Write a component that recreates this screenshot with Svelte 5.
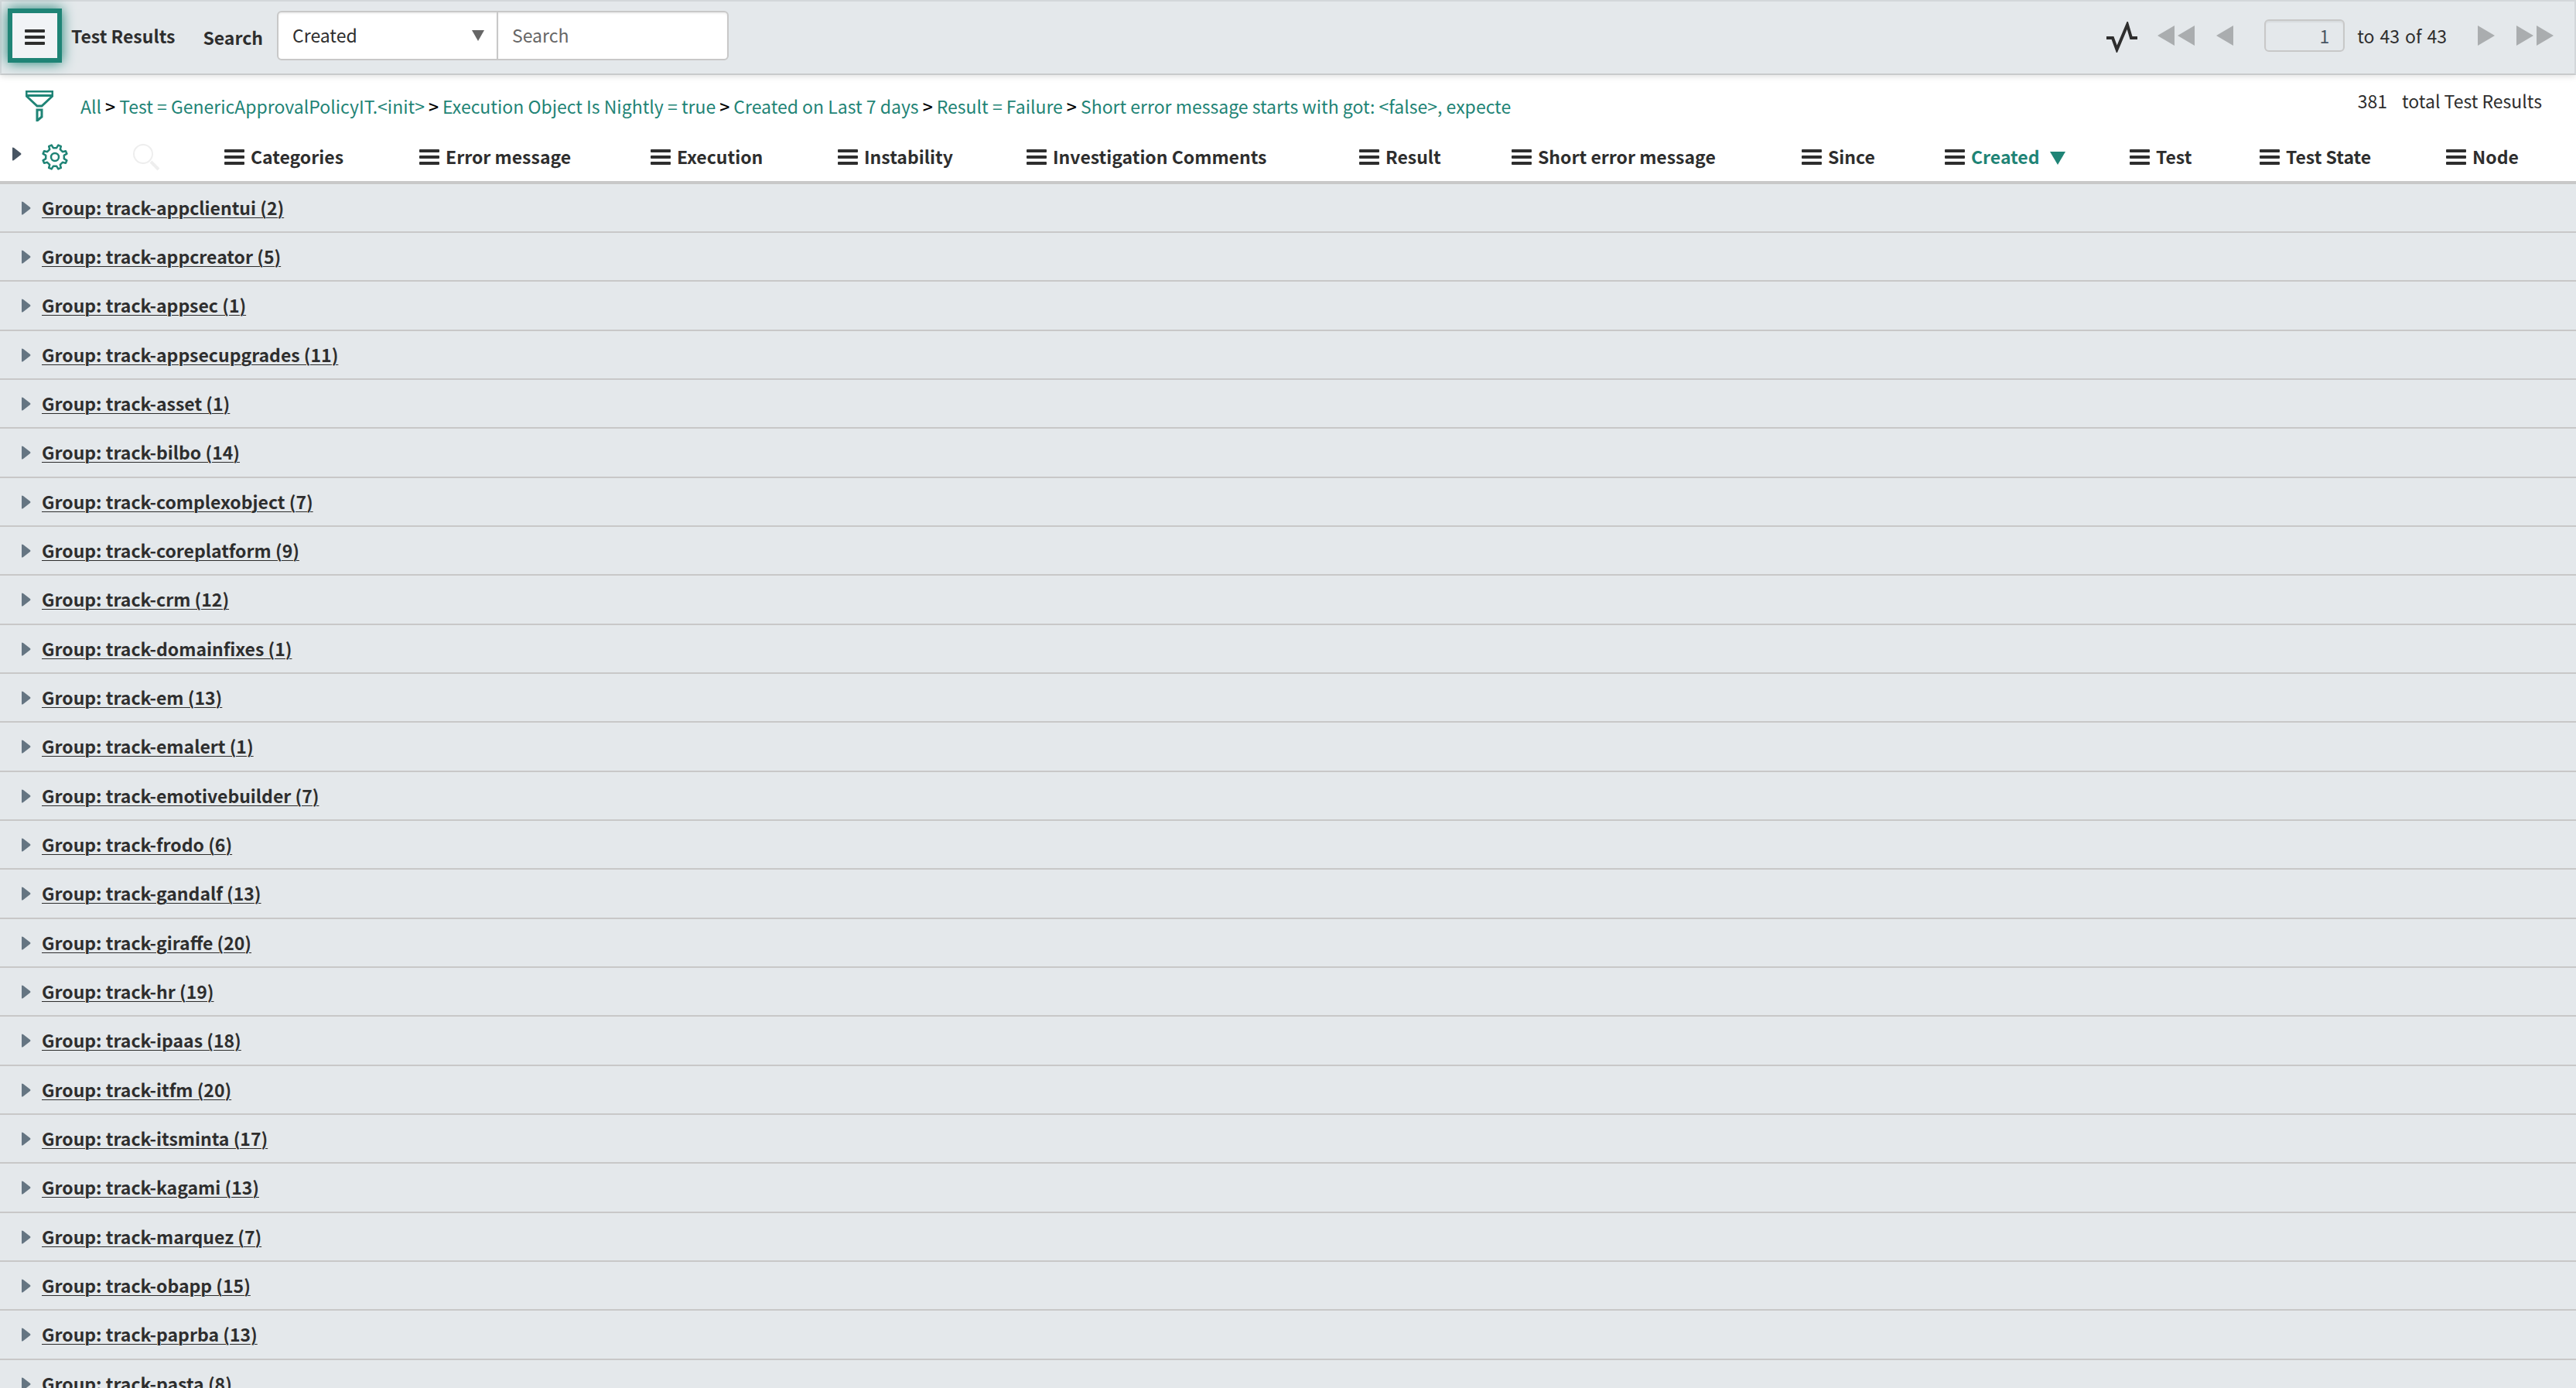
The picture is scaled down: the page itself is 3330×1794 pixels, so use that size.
<script>
  const fields = ['Created', 'Test', 'Test State', 'Node'];
  const crumbs = [
    'All',
    'Test = GenericApprovalPolicyIT.<init>',
    'Execution Object Is Nightly = true',
    'Created on Last 7 days',
    'Result = Failure',
    'Short error message starts with got: <false>, expecte'
  ];
  // Relative column widths; the first three are the expander, gear and search cells.
  const leading = [44, 118, 128];
  const columns = [
    { label: 'Categories', size: 252 },
    { label: 'Error message', size: 299 },
    { label: 'Execution', size: 242 },
    { label: 'Instability', size: 244 },
    { label: 'Investigation Comments', size: 430 },
    { label: 'Result', size: 197 },
    { label: 'Short error message', size: 375 },
    { label: 'Since', size: 185 },
    { label: 'Created', size: 239, sorted: true },
    { label: 'Test', size: 168 },
    { label: 'Test State', size: 241 },
    { label: 'Node', size: 168 }
  ];
  const sizes = [...leading, ...columns.map((c) => c.size)];
  const total = sizes.reduce((a, b) => a + b, 0);
  const groups = [
    ['track-appclientui', 2], ['track-appcreator', 5], ['track-appsec', 1],
    ['track-appsecupgrades', 11], ['track-asset', 1], ['track-bilbo', 14],
    ['track-complexobject', 7], ['track-coreplatform', 9], ['track-crm', 12],
    ['track-domainfixes', 1], ['track-em', 13], ['track-emalert', 1],
    ['track-emotivebuilder', 7], ['track-frodo', 6], ['track-gandalf', 13],
    ['track-giraffe', 20], ['track-hr', 19], ['track-ipaas', 18],
    ['track-itfm', 20], ['track-itsminta', 17], ['track-kagami', 13],
    ['track-marquez', 7], ['track-obapp', 15], ['track-paprba', 13],
    ['track-pasta', 8]
  ];

  // Outline of an eight-toothed gear centred on (18, 18).
  function gear() {
    const pts = [];
    for (let i = 0; i < 8; i++) {
      const a = (i * Math.PI) / 4 + Math.PI / 8;
      for (const [off, r] of [[-0.21, 12], [-0.12, 16], [0.12, 16], [0.21, 12]]) {
        pts.push(`${(18 + r * Math.cos(a + off)).toFixed(2)} ${(18 + r * Math.sin(a + off)).toFixed(2)}`);
      }
    }
    return `M${pts.join('L')}Z`;
  }
  const gearPath = gear();
</script>

{#snippet bars()}
  <svg class="bars" viewBox="0 0 26 20" aria-hidden="true">
    <rect width="26" height="4" rx="1" />
    <rect y="8" width="26" height="4" rx="1" />
    <rect y="16" width="26" height="4" rx="1" />
  </svg>
{/snippet}

<div class="page">
  <header class="toolbar">
    <button class="menu" aria-label="List controls">{@render bars()}</button>
    <h1>Test Results</h1>
    <label class="search-label" for="query">Search</label>
    <div class="search">
      <div class="pick">
        <select aria-label="Search field">
          {#each fields as f}<option>{f}</option>{/each}
        </select>
        <svg class="caret" viewBox="0 0 16 14" aria-hidden="true"><path d="M0 0H16L8 14Z" /></svg>
      </div>
      <input id="query" type="text" placeholder="Search" />
    </div>
    <nav class="pager" aria-label="Pages">
      <button class="pulse" aria-label="Activity">
        <svg viewBox="0 0 40 40" width="40" height="40"><path d="M0 21H8L13.500 36L27 4L32 21H40" /></svg>
      </button>
      <button class="first" aria-label="First page"><svg viewBox="0 0 48 26" width="48" height="26"><path d="M22 0V26L0 13ZM48 0V26L26 13Z" /></svg></button>
      <button class="prev" aria-label="Previous page"><svg viewBox="0 0 22 26" width="22" height="26"><path d="M22 0V26L0 13Z" /></svg></button>
      <input class="number" type="text" value="1" aria-label="Page row" />
      <span class="range"><span>to</span><span>43</span><span>of</span><span>43</span></span>
      <button class="next" aria-label="Next page"><svg viewBox="0 0 22 26" width="22" height="26"><path d="M0 0V26L22 13Z" /></svg></button>
      <button class="last" aria-label="Last page"><svg viewBox="0 0 48 26" width="48" height="26"><path d="M0 0V26L22 13ZM26 0V26L48 13Z" /></svg></button>
    </nav>
  </header>

  <div class="filter">
    <button class="funnel" aria-label="Show filter">
      <svg viewBox="0 0 36 40" width="36" height="40"><path d="M1 1H35V7L21 20H15L1 7ZM1 6.500H35M15 25H21V34L15 39Z" /></svg>
    </button>
    <nav class="crumbs" aria-label="Filter">
      {#each crumbs as c, i}{#if i}<b>&gt;</b>{/if}<a href="#filter">{c}</a>{/each}
    </nav>
    <p class="count"><span>381</span><span>total Test Results</span></p>
  </div>

  <main>
    <table>
      <colgroup>
        {#each sizes as s}<col style:width="{(s / total) * 100}%" />{/each}
      </colgroup>
      <thead>
        <tr>
          <th>
            <button class="cell expand" aria-label="Expand all groups">
              <svg viewBox="0 0 12 18" width="12" height="18"><path d="M0 1Q0 0 2 1L11 8Q12 9 11 10L2 17Q0 18 0 17Z" /></svg>
            </button>
          </th>
          <th>
            <button class="cell gear" aria-label="Personalize list">
              <svg viewBox="0 0 36 36" width="36" height="36"><path d={gearPath} /><circle cx="18" cy="18" r="5" /></svg>
            </button>
          </th>
          <th>
            <button class="cell find" aria-label="Search columns">
              <svg viewBox="0 0 36 36" width="36" height="36"><circle cx="14" cy="14" r="12" /><path class="handle" d="M24 24L34 34" /></svg>
            </button>
          </th>
          {#each columns as c}
            <th>
              <button class="cell" class:sorted={c.sorted}>
                {@render bars()}<span>{c.label}</span>
                {#if c.sorted}<svg class="down" viewBox="0 0 20 17" width="20" height="17"><path d="M0 0H20L10 17Z" /></svg>{/if}
              </button>
            </th>
          {/each}
        </tr>
      </thead>
      <tbody>
        {#each groups as [name, n]}
          <tr>
            <td colspan={sizes.length}>
              <div class="group">
                <button aria-label="Expand {name}">
                  <svg viewBox="0 0 12 18" width="12" height="18"><path d="M0 1Q0 0 2 1L11 8Q12 9 11 10L2 17Q0 18 0 17Z" /></svg>
                </button>
                <a href="#{name}">Group: {name} ({n})</a>
              </div>
            </td>
          </tr>
        {/each}
      </tbody>
    </table>
  </main>
</div>

<style>
  :global(body) { margin: 0; background: #fff; }
  .page {
    height: 100vh;
    overflow: hidden;
    display: flex;
    flex-direction: column;
    font: 23px/36px "Noto Sans CJK SC", "Open Sans", sans-serif;
    color: #2e2e2e;
  }
  .page * { box-sizing: border-box; }
  button, input, select { font: inherit; color: inherit; margin: 0; }
  button { display: flex; align-items: center; padding: 0; border: 0; background: none; }
  svg { display: block; flex: none; }
  a { color: inherit; text-decoration: none; }
  .bars { width: 26px; height: 20px; fill: #2e2e2e; }

  .toolbar {
    flex: none;
    position: relative;
    height: 97px;
    display: flex;
    align-items: center;
    padding: 0 27px 5px 8px;
    background: #e4e8eb;
    border: 2px solid #d3d7da;
    border-bottom-color: #c8cacc;
    box-shadow: 0 2px 8px rgba(0, 0, 0, .12);
  }
  .menu {
    width: 70px;
    height: 70px;
    padding-top: 4px;
    justify-content: center;
    border: 6px solid #1f8476;
    background: #f1f3f6;
    box-shadow: 0 0 16px #1f8476;
  }
  h1 { margin: 0 0 0 12px; font: inherit; font-weight: 600; }
  .search-label { margin: 3px 18px 0 36px; font-weight: 600; }
  .search { display: flex; height: 64px; }
  .pick { position: relative; width: 286px; }
  select, .search input {
    width: 100%;
    height: 100%;
    padding: 0 18px 3px;
    border: 2px solid #c8c8c8;
    background: #fff;
    box-shadow: inset 0 2px 2px rgba(0, 0, 0, .06);
    appearance: none;
    outline: 0;
  }
  select { border-radius: 6px 0 0 6px; }
  .search input { width: 300px; margin-left: -2px; border-radius: 0 6px 6px 0; }
  .search input::placeholder { color: #666; opacity: 1; }
  .caret { position: absolute; right: 18px; top: 25px; width: 16px; height: 14px; fill: #666; pointer-events: none; }

  .pager { display: flex; align-items: center; margin-left: auto; }
  .pager svg { fill: #aaadaf; }
  .pager .pulse svg { margin-top: 4px; fill: none; stroke: #2e2e2e; stroke-width: 4; }
  .first { margin-left: 26px; }
  .prev { margin-left: 28px; }
  .number {
    width: 104px;
    height: 42px;
    margin: 0 16px 0 40px;
    padding: 0 18px;
    border: 2px solid #c8c8c8;
    border-radius: 6px;
    background: none;
    color: #485563;
    text-align: right;
    box-shadow: inset 0 2px 2px rgba(0, 0, 0, .06);
  }
  .range { display: flex; gap: 7px; }
  .next { margin-left: 40px; }
  .last { margin-left: 28px; }

  .filter { flex: none; display: flex; align-items: flex-start; height: 80px; padding: 20px 44px 0 33px; }
  .funnel svg { fill: none; stroke: #1f8476; stroke-width: 3; }
  .crumbs { display: flex; margin: 2px 0 0 35px; color: #1f8476; white-space: nowrap; }
  .crumbs b { margin: 0 5px; font-weight: 500; color: #000; }
  .count { display: flex; gap: 19px; margin: -5px 0 0 auto; }

  main { flex: 1; min-height: 0; overflow: hidden; }
  table { width: 100%; table-layout: fixed; border-collapse: separate; border-spacing: 0; }
  th { height: 61px; padding: 0 0 6px; border-bottom: 4px solid #c8c8c8; font-weight: 600; text-align: left; }
  .cell { gap: 8px; white-space: nowrap; }
  .cell span, .group a { padding-bottom: 2px; }
  .cell.sorted span { color: #1f8476; }
  .down { fill: #1f8476; margin: 3px 0 0 6px; }
  .expand { padding: 0 0 8px 16px; fill: #485563; }
  .gear { padding-left: 9px; }
  .gear svg { fill: none; stroke: #1f8476; stroke-width: 2.5; stroke-linejoin: round; }
  .find { padding-left: 9px; }
  .find svg { fill: none; stroke: #eee; stroke-width: 2; }
  .find .handle { stroke-width: 4; }

  td { height: 63px; padding: 0; background: #e4e8eb; border-bottom: 2px solid #c8c8c8; }
  tr:nth-child(3n) td { height: 64px; }
  .group { display: flex; align-items: center; gap: 14px; padding-left: 28px; font-weight: 600; }
  .group svg { fill: #657582; }
  .group a { text-decoration: underline; text-decoration-thickness: 1px; text-underline-offset: 3px; }
</style>
